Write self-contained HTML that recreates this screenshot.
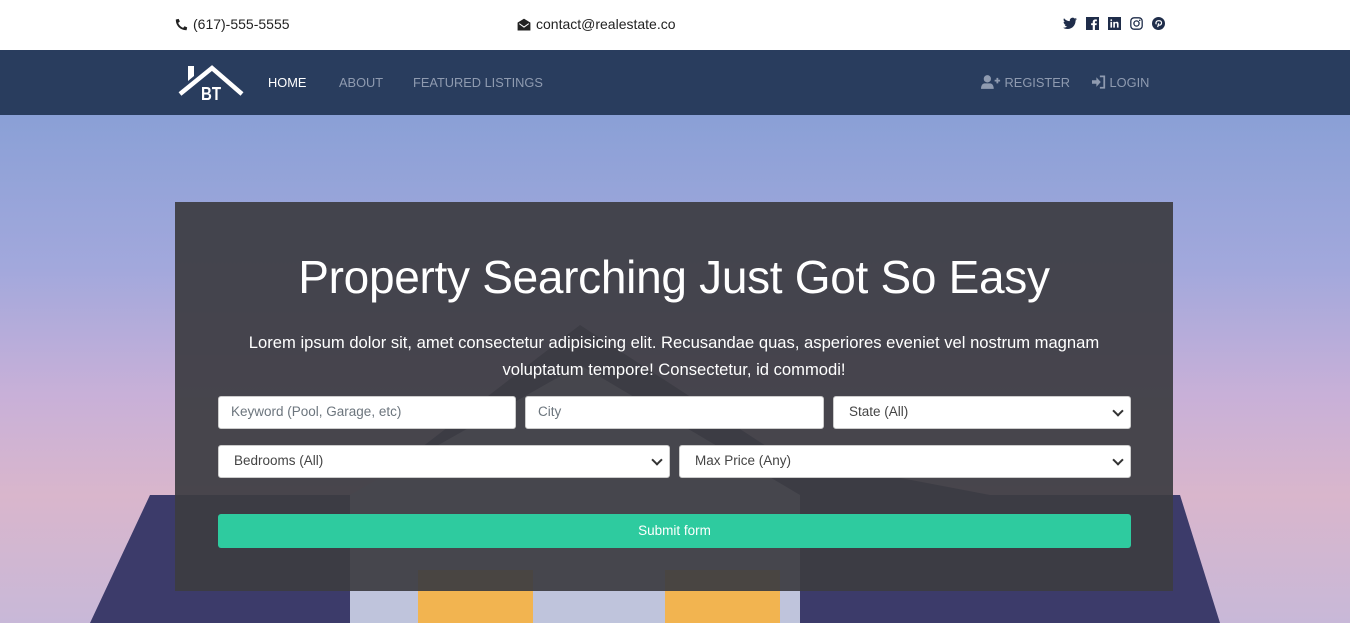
<!DOCTYPE html>
<html><head><meta charset="utf-8"><style>
*{box-sizing:border-box;margin:0;padding:0}
body{width:1350px;height:623px;overflow:hidden;font-family:"Segoe UI","Liberation Sans",sans-serif;position:relative;background:#fff}
.top{height:50px;position:relative;font-size:14px;color:#222}
.top span{position:absolute;top:16px;display:flex;align-items:center;gap:5px}
nav{position:absolute;top:50px;left:0;width:1350px;height:65px;background:#293d5e}
nav a{position:absolute;top:25px;font-size:12.8px;color:#8f9bb0;text-decoration:none}
.hero{position:absolute;top:115px;left:0;width:1350px;height:508px;overflow:hidden;
background:linear-gradient(180deg,#8aa0d6 0%,#a2a8dc 30%,#c8b0d8 55%,#d9b6cc 75%,#c8b8d8 100%)}
.box{position:absolute;left:175px;top:87px;width:998px;height:389px;background:rgba(60,60,66,.93)}
h1{position:absolute;top:48px;width:100%;text-align:center;color:#fff;font-weight:300;font-size:46px;font-family:"Segoe UI Light","Liberation Sans",sans-serif;letter-spacing:-.3px}
p{position:absolute;top:127px;left:40px;right:40px;text-align:center;color:#fff;font-size:16.6px;line-height:27px}
.f{position:absolute;height:33px;background:#fff;border:1px solid #ccc;border-radius:3px;font-size:13.5px;color:#6c757d;padding:7px 12px}
.s{color:#444;padding-left:15px}
.s:after{content:"";position:absolute;right:8px;top:10px;width:6px;height:6px;border-right:2px solid #333;border-bottom:2px solid #333;transform:rotate(45deg)}
.btn{position:absolute;left:43px;top:312px;width:913px;height:34px;background:#2ecb9f;border-radius:3px;color:#fff;text-align:center;font-size:13.5px;line-height:34px}
</style></head><body>
<div class="top">
<span style="left:175px"><svg width="13" height="13" viewBox="0 0 16 16"><path d="M15 11.5l-3.3-1.4-1.7 2A11 11 0 0 1 3.9 6L6 4.3 4.5 1 1 1.8C1 9.5 6.5 15 14.2 15z" fill="#222"/></svg>(617)-555-5555</span>
<span style="left:517px"><svg width="14" height="13" viewBox="0 0 16 15"><path d="M8 0L0 5v10h16V5zM2.5 6.5L8 10.5l5.5-4" fill="#222" stroke="#fff" stroke-width="1.2"/></svg>contact@realestate.co</span>
<span style="left:1063px;gap:9px;top:17px">
<svg width="14" height="13" viewBox="0 0 24 20"><path d="M24 2.4a10 10 0 0 1-2.8.8A5 5 0 0 0 23.3.4a10 10 0 0 1-3.1 1.2A4.9 4.9 0 0 0 11.8 6 14 14 0 0 1 1.7.9a4.9 4.9 0 0 0 1.5 6.6A5 5 0 0 1 1 6.9a4.9 4.9 0 0 0 3.9 4.8 5 5 0 0 1-2.2.1 4.9 4.9 0 0 0 4.6 3.4A9.9 9.9 0 0 1 0 17.2 14 14 0 0 0 7.5 19.4c9.1 0 14-7.5 14-14v-.6A10 10 0 0 0 24 2.4z" fill="#1f2d4a"/></svg>
<svg width="13" height="13" viewBox="0 0 16 16"><rect width="16" height="16" fill="#1f2d4a"/><path d="M11 16v-6h2l.3-2.3H11V6.3c0-.7.2-1.1 1.1-1.1h1.3V3.1a17 17 0 0 0-1.9-.1c-1.9 0-3.2 1.1-3.2 3.3v1.4H6.3V10h2V16z" fill="#fff"/></svg>
<svg width="13" height="13" viewBox="0 0 16 16"><rect width="16" height="16" fill="#1f2d4a"/><path d="M3 6h2v7H3zM4 2.8a1.1 1.1 0 1 1 0 2.2 1.1 1.1 0 0 1 0-2.2zM6.5 6h2v1c.4-.7 1.2-1.2 2.2-1.2 2 0 2.3 1.3 2.3 3V13h-2V9.3c0-.9 0-1.8-1.2-1.8S8.5 8.3 8.5 9.2V13h-2z" fill="#fff"/></svg>
<svg width="13" height="13" viewBox="0 0 16 16"><rect x="1" y="1" width="14" height="14" rx="4" fill="none" stroke="#1f2d4a" stroke-width="1.6"/><circle cx="8" cy="8" r="3.2" fill="none" stroke="#1f2d4a" stroke-width="1.6"/><circle cx="12" cy="4" r="1" fill="#1f2d4a"/></svg>
<svg width="13" height="13" viewBox="0 0 16 16"><circle cx="8" cy="8" r="8" fill="#1f2d4a"/><path d="M7 12.5L8.2 7.8M8 10c2.5.5 4-1.3 3.7-3.3C11.3 4 6 3.7 5 6.5c-.3 1 0 2 .5 2.3" fill="none" stroke="#fff" stroke-width="1.5"/></svg>
</span>
</div>
<nav>
<svg style="position:absolute;left:178px;top:14px" width="66" height="38" viewBox="0 0 66 38"><path d="M2 30L34 4L64 30" fill="none" stroke="#fff" stroke-width="4.5"/><path d="M10 2h6v10l-6 5z" fill="#fff"/><text x="23" y="36" font-family="Liberation Sans Narrow,Liberation Sans" font-weight="bold" font-size="18" fill="#fff" textLength="20" lengthAdjust="spacingAndGlyphs">BT</text></svg>
<a style="left:268px;color:#fff">HOME</a><a style="left:339px">ABOUT</a><a style="left:413px">FEATURED LISTINGS</a>
<a style="left:981px"><svg width="20" height="14" viewBox="0 0 22 15" style="vertical-align:-2px"><circle cx="7" cy="4" r="4" fill="#8f9bb0"/><path d="M0 15c0-4 2-6 4-6h6c2 0 4 2 4 6z" fill="#8f9bb0"/><path d="M15 6h6M18 3v6" stroke="#8f9bb0" stroke-width="2"/></svg> REGISTER</a>
<a style="left:1092px"><svg width="14" height="14" viewBox="0 0 16 15" style="vertical-align:-2px"><path d="M0 5.5h5V2l5 5.5-5 5.5V9.5H0z" fill="#8f9bb0"/><path d="M9 1h5v13H9" fill="none" stroke="#8f9bb0" stroke-width="2"/></svg> LOGIN</a>
</nav>
<div class="hero">
<svg style="position:absolute;left:0;top:0" width="1350" height="508">
<polygon points="90,508 150,380 360,380 580,210 780,340 990,380 1180,380 1220,508" fill="#3c3b6a"/>
<polygon points="350,508 350,380 580,250 800,380 800,508" fill="#bfc4dc"/>
<rect x="418" y="455" width="115" height="53" fill="#f2b450"/>
<rect x="665" y="455" width="115" height="53" fill="#f2b450"/>
</svg>
<div class="box">
<h1>Property Searching Just Got So Easy</h1>
<p>Lorem ipsum dolor sit, amet consectetur adipisicing elit. Recusandae quas, asperiores eveniet vel nostrum magnam voluptatum tempore! Consectetur, id commodi!</p>
<div class="f" style="left:43px;top:194px;width:298px">Keyword (Pool, Garage, etc)</div>
<div class="f" style="left:350px;top:194px;width:299px">City</div>
<div class="f s" style="left:658px;top:194px;width:298px">State (All)</div>
<div class="f s" style="left:43px;top:243px;width:452px">Bedrooms (All)</div>
<div class="f s" style="left:504px;top:243px;width:452px">Max Price (Any)</div>
<div class="btn">Submit form</div>
</div>
</div>
</body></html>
